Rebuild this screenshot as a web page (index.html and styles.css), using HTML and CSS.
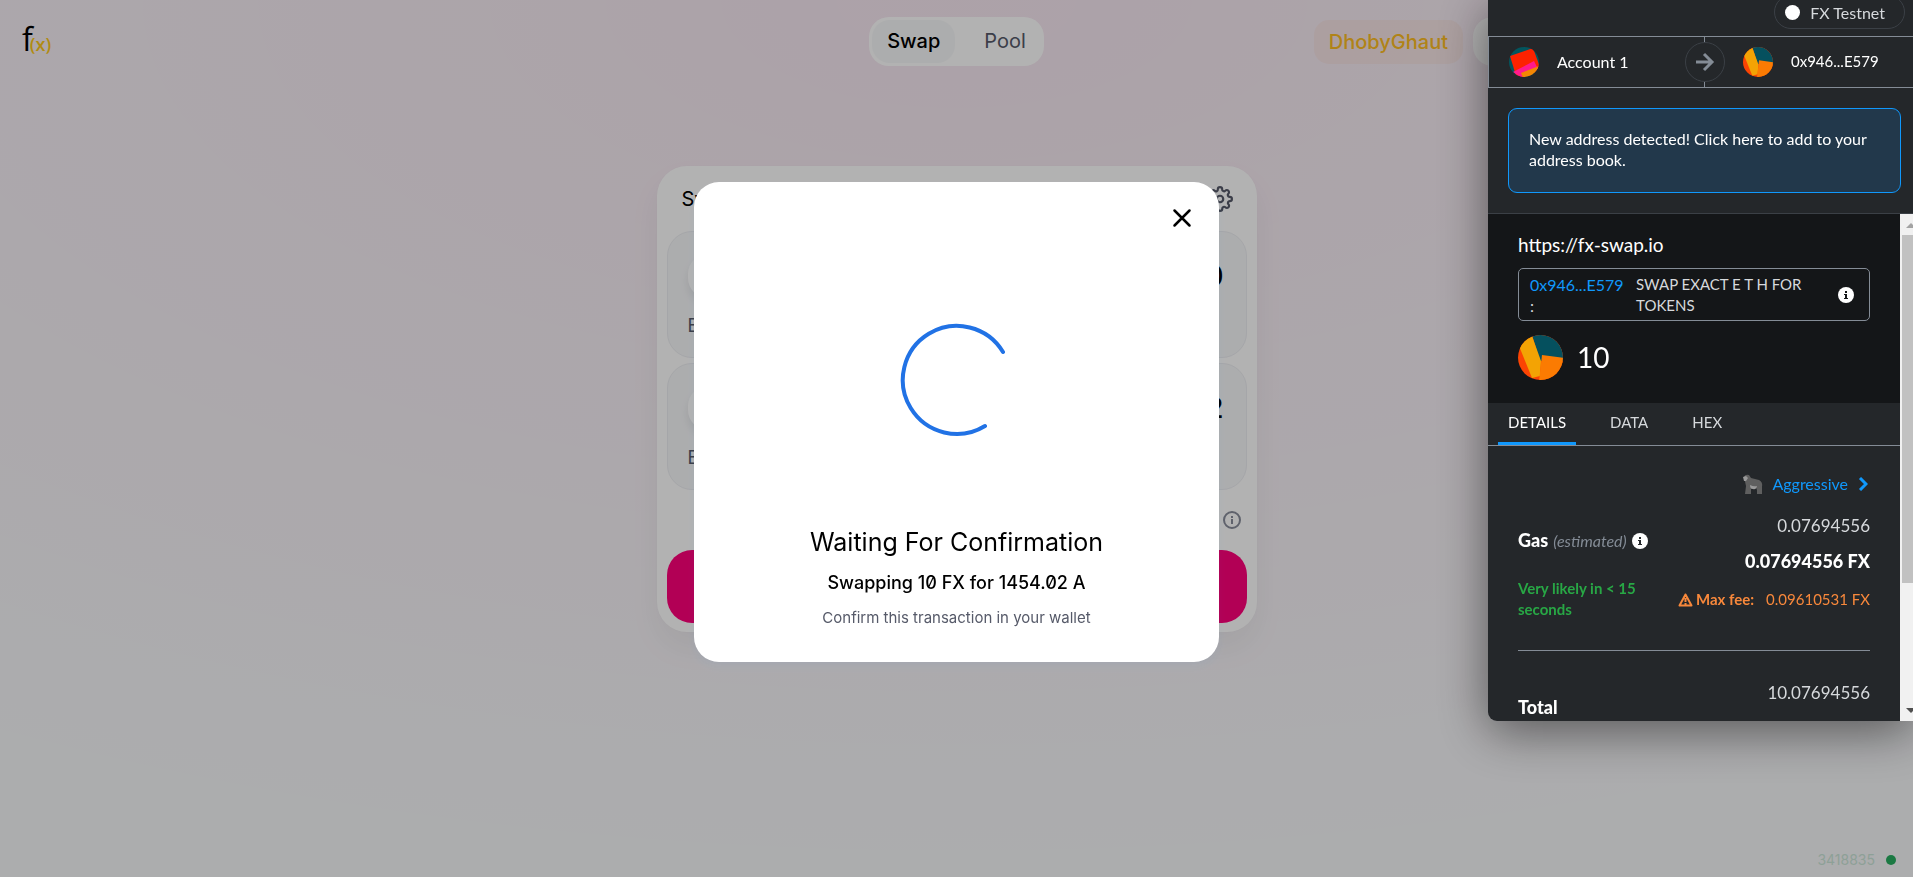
FILE: index.html
```html
<!DOCTYPE html>
<html lang="en">
<head>
<meta charset="utf-8">
<title>FX Swap</title>
<link rel="stylesheet" href="styles.css">
</head>
<body>
<div class="app">
  <header class="topbar">
    <a class="logo" href="#" aria-label="f(x) home"><span class="logo-f">f</span><span class="logo-x">(x)</span></a>
    <nav class="nav">
      <a class="nav-link active" href="#">Swap</a>
      <a class="nav-link" href="#">Pool</a>
    </nav>
    <div class="topbar-right">
      <span class="network">DhobyGhaut</span>
      <button class="account-pill" aria-label="Account"></button>
    </div>
  </header>

  <main class="swap-card">
    <div class="swap-head">
      <span>Swap</span>
      <button class="bare" aria-label="Settings">
        <svg width="26" height="26" viewBox="0 0 24 24" fill="none" stroke="#565a69" stroke-width="2" stroke-linecap="round" stroke-linejoin="round"><circle cx="12" cy="12" r="3"/><path d="M19.4 15a1.65 1.65 0 0 0 .33 1.82l.06.06a2 2 0 1 1-2.83 2.83l-.06-.06a1.65 1.65 0 0 0-2.8 1.17V21a2 2 0 1 1-4 0v-.09a1.65 1.65 0 0 0-2.9-1.08l-.06.06a2 2 0 1 1-2.83-2.83l.06-.06A1.65 1.65 0 0 0 3.09 14H3a2 2 0 1 1 0-4h.09A1.65 1.65 0 0 0 4.6 7.2l-.33-.02a2 2 0 1 1 2.83-2.83l.06.06A1.65 1.65 0 0 0 10 3.09V3a2 2 0 1 1 4 0v.09a1.65 1.65 0 0 0 2.82 1.27l.06-.06a2 2 0 1 1 2.83 2.83l-.06.06A1.65 1.65 0 0 0 20.91 10H21a2 2 0 1 1 0 4h-.09a1.65 1.65 0 0 0-1.51 1z"/></svg>
      </button>
    </div>
    <section class="panel">
      <div class="panel-row"><button class="token">FX</button><span class="amount">10</span></div>
      <span class="balance">Balance</span>
    </section>
    <section class="panel">
      <div class="panel-row"><button class="token">A</button><span class="amount">1454.02</span></div>
      <span class="balance">Balance</span>
    </section>
    <div class="rate">
      <svg width="20" height="20" viewBox="0 0 20 20" fill="none" stroke="#888d9b" stroke-width="2"><circle cx="10" cy="10" r="8"/><path d="M10 9v5M10 6v2"/></svg>
    </div>
    <button class="swap-btn" aria-label="Swap"></button>
  </main>

  <footer class="block"><span>3418835</span><i class="block-dot"></i></footer>
</div>

<div class="overlay">
  <div class="modal" role="dialog" aria-labelledby="wait-title">
    <button class="bare close" aria-label="Close">
      <svg width="30" height="30" viewBox="0 0 24 24" fill="none" stroke="#000" stroke-width="2" stroke-linecap="round"><path d="M18 6 6 18M6 6l12 12"/></svg>
    </button>
    <svg class="spinner" width="114" height="114" viewBox="0 0 114 114" fill="none" stroke="#2172e5" stroke-width="4" stroke-linecap="round"><path d="M85 103A54 54 0 1 1 103 29"/></svg>
    <h1 class="modal-title" id="wait-title">Waiting For Confirmation</h1>
    <p class="modal-sub">Swapping 10 FX for 1454.02 A</p>
    <p class="modal-note">Confirm this transaction in your wallet</p>
  </div>
</div>

<aside class="wallet">
  <div class="net-row"><button class="net-pill"><i class="net-dot"></i>FX Testnet</button></div>
  <div class="accounts">
    <div class="acct">
      <svg class="avatar" viewBox="0 0 30 30"><defs><clipPath id="ca"><circle cx="15" cy="15" r="15"/></clipPath></defs><g clip-path="url(#ca)"><path fill="#03555e" d="M0 0h30v30H0z"/><path fill="#fc2200" d="M1 9 24 1l8 22-24 9z"/><path fill="#ff1a8c" d="M4 25 25 14l4 8-16 9z"/><path fill="#f38603" d="M12 26l18-7v12H14z"/></g></svg>
      <span>Account 1</span>
    </div>
    <div class="acct">
      <svg class="avatar" viewBox="0 0 45 45"><defs><clipPath id="cb"><circle cx="22.500" cy="22.500" r="22.500"/></clipPath></defs><g clip-path="url(#cb)"><path fill="#fb4403" d="M0 0h45v45H0z"/><path fill="#05505e" d="M14 0h31v26H22z"/><path fill="#f3a304" d="M14 1-1 6l15 37 8-2 1-15z"/><path fill="#fb7b02" d="m24 20 22 3v23H21z"/></g></svg>
      <span>0x946...E579</span>
    </div>
    <span class="arrow"><svg width="20" height="20" viewBox="0 0 20 20" fill="none" stroke="#848c96" stroke-width="3"><path d="M1 10h16M9 2l8 8-8 8"/></svg></span>
  </div>
  <div class="notice-wrap"><button class="notice">New address detected! Click here to add to your address book.</button></div>

  <div class="scroll-area">
    <div class="content">
      <section class="summary">
        <div class="origin">https://fx-swap.io</div>
        <div class="call">
          <span class="call-addr"><a href="#">0x946...E579</a> :</span>
          <span class="call-name">SWAP EXACT E T H FOR TOKENS</span>
          <svg width="16" height="16" viewBox="0 0 16 16"><circle cx="8" cy="8" r="8" fill="#fff"/><path d="M6 7h3v4h1v1H6v-1h1V8H6zM7 4h2v2H7z" fill="#141618"/></svg>
        </div>
        <div class="value">
          <svg class="avatar-lg" viewBox="0 0 45 45"><g clip-path="url(#cb)"><path fill="#fb4403" d="M0 0h45v45H0z"/><path fill="#05505e" d="M14 0h31v26H22z"/><path fill="#f3a304" d="M14 1-1 6l15 37 8-2 1-15z"/><path fill="#fb7b02" d="m24 20 22 3v23H21z"/></g></svg>
          <span>10</span>
        </div>
      </section>
      <div class="tabs">
        <button class="tab on">DETAILS</button>
        <button class="tab">DATA</button>
        <button class="tab">HEX</button>
      </div>
      <section class="details">
        <button class="speed">
          <svg width="20" height="20" viewBox="0 0 20 20"><path fill="#5f5f5f" d="M1 3q1-3 5-2l2 3 8 2q4 2 3 7v7h-5v-4l-1-2-5 1v5H2l1-8z"/><path fill="#9a9a9a" d="M0 3l3-1 2 2-2 3-2 0zM7 11q4 2 7 1-1 4-4 3-3 0-3-4z"/></svg>
          Aggressive
          <svg class="chev" width="10" height="14" viewBox="0 0 10 14" fill="none" stroke="#1098fc" stroke-width="3"><path d="M2 1l6 6-6 6"/></svg>
        </button>
        <div class="gas">
          <div class="gas-left">
            <div class="gas-label"><b>Gas</b><i>(estimated)</i><svg width="16" height="16" viewBox="0 0 16 16"><circle cx="8" cy="8" r="8" fill="#fff"/><path d="M6 7h3v4h1v1H6v-1h1V8H6zM7 4h2v2H7z" fill="#24272a"/></svg></div>
            <div class="likely">Very likely in &lt; 15 seconds</div>
          </div>
          <div class="gas-right">
            <span class="num">0.07694556</span>
            <b class="num-b">0.07694556 FX</b>
            <div class="maxfee"><svg width="15" height="14" viewBox="0 0 15 14" fill="none" stroke="#f8883b" stroke-width="2" stroke-linejoin="round"><path d="M7.500 1.500 1.500 12.500h12zM7.500 5v4M7.500 10v1.500"/></svg><b>Max fee:</b><span>0.09610531 FX</span></div>
          </div>
        </div>
        <div class="total"><b>Total</b><span class="num">10.07694556</span></div>
      </section>
    </div>
    <div class="bar" aria-hidden="true"><i class="bar-up"></i><i class="bar-thumb"></i><i class="bar-down"></i></div>
  </div>
</aside>
</body>
</html>
```
FILE: styles.css
```css
* { box-sizing: border-box; }
body {
  margin: 0;
  min-height: 100vh;
  overflow: hidden;
  font-family: Inter, "Liberation Sans", sans-serif;
  font-variant-numeric: slashed-zero;
  color: #000;
  background: #f7f8fa radial-gradient(100vw 100vh at 50% 0, rgba(255, 0, 122, 0.065), rgba(255, 0, 122, 0) 100%) no-repeat;
}
button { font: inherit; color: inherit; border: 0; padding: 0; background: none; cursor: pointer; }
a { text-decoration: none; color: inherit; }
p, h1 { margin: 0; }
svg { flex-shrink: 0; }
.bare { display: flex; }

.app { min-height: 100vh; display: flex; flex-direction: column; align-items: center; }
.topbar {
  align-self: stretch;
  display: grid;
  grid-template-columns: 1fr auto 1fr;
  align-items: center;
  padding: 17px 20px 0;
}
.logo { display: flex; align-items: baseline; padding: 0 0 5px 2px; font-family: "Open Sans", sans-serif; }
.logo-f { font-size: 32px; line-height: 36px; }
.logo-x { font-size: 18px; font-weight: 600; color: #fdc81a; margin-left: -3px; }
.nav { display: flex; padding: 3px; gap: 14px; background: #fff; border-radius: 20px; }
.nav-link { padding: 0 15px; line-height: 43px; font-size: 20px; color: #565a69; border-radius: 18px; font-weight: 400; }
.nav-link.active { color: #000; font-weight: 500; background: #f7f8fa; }
.topbar-right { display: flex; justify-content: flex-end; align-items: center; gap: 10px; }
.network { padding: 0 15px; line-height: 44px; font-size: 20px; font-weight: 500; color: #fdbc22; background: rgba(255, 140, 60, 0.07); border-radius: 15px; }
.account-pill { width: 420px; height: 49px; border-radius: 20px; background: #fff; }

.swap-card {
  width: 600px;
  margin-top: 100px;
  padding: 0 10px 9px;
  background: #fff;
  border-radius: 30px;
  box-shadow: 0 0 2px rgba(0, 0, 0, 0.02), 0 16px 32px rgba(0, 0, 0, 0.05);
}
.swap-head { display: flex; justify-content: space-between; align-items: center; height: 65px; padding: 0 14px 0 15px; font-size: 20px; }
.panel { height: 127px; margin-bottom: 5px; padding: 22px 22px 0 20px; background: #f7f8fa; border: 1px solid #edeef2; border-radius: 25px; }
.panel-row { display: flex; justify-content: space-between; align-items: center; }
.token { width: 140px; height: 44px; border-radius: 20px; background: #fff; box-shadow: 0 6px 10px rgba(0, 0, 0, 0.08); }
.amount { font-size: 28px; font-weight: 500; }
.balance { display: block; margin-top: 16px; font-size: 18px; line-height: 24px; color: #565a69; }
.rate { display: flex; justify-content: flex-end; align-items: center; height: 55px; padding: 0 5px 5px 0; }
.swap-btn { display: block; width: 100%; height: 73px; border-radius: 25px; background: #ff007a; }

.block { margin-top: auto; align-self: flex-end; display: flex; align-items: center; gap: 11px; padding: 0 17px 8px; font-size: 14px; line-height: 18px; color: #cbe6d8; }
.block-dot { width: 10px; height: 10px; border-radius: 50%; background: #27ae60; }

.overlay {
  position: fixed;
  inset: 0;
  display: flex;
  justify-content: center;
  align-items: center;
  padding-bottom: 33px;
  background: rgba(0, 0, 0, 0.3);
}
.modal {
  width: 525px;
  padding: 21px 22px 34px;
  display: flex;
  flex-direction: column;
  align-items: center;
  background: #fff;
  border-radius: 25px;
  box-shadow: 0 5px 10px rgba(47, 128, 237, 0.05);
}
.close { align-self: flex-end; }
.spinner { margin: 90px 0 89px; }
.modal-title { font-size: 25px; line-height: 32px; font-weight: 400; }
.modal-sub { margin-top: 14px; font-size: 18px; line-height: 22px; font-weight: 500; }
.modal-note { margin-top: 14px; font-size: 15px; line-height: 20px; color: #565a69; }

.wallet {
  position: fixed;
  top: 0;
  right: 0;
  width: 425px;
  height: 721px;
  display: flex;
  flex-direction: column;
  font-family: Lato, sans-serif;
  font-variant-numeric: normal;
  font-size: 16px;
  line-height: 21px;
  color: #fff;
  background: #24272a;
  border-radius: 0 0 0 9px;
  box-shadow: 0 10px 50px rgba(0, 0, 0, 0.5);
}
.net-row { display: flex; justify-content: flex-end; height: 36px; padding-right: 8px; }
.net-pill { display: flex; align-items: center; gap: 10px; height: 34px; margin-top: -5px; padding: 0 19px 0 10px; color: #d6d9dc; border: 1px solid #3b4046; border-radius: 17px; }
.net-dot { width: 15px; height: 15px; border-radius: 50%; background: #fff; }
.accounts { position: relative; display: grid; grid-template-columns: 215px 1fr; height: 52px; border: 1px solid #848c96; border-right: 0; }
.acct { display: flex; align-items: center; gap: 18px; padding-left: 20px; }
.acct span { padding-bottom: 2px; }
.acct + .acct { border-left: 1px solid #848c96; padding-left: 38px; font-size: 15px; }
.avatar { width: 30px; height: 30px; }
.avatar-lg { width: 45px; height: 45px; }
.arrow { position: absolute; left: 196px; top: 5px; width: 40px; height: 40px; display: grid; place-items: center; border: 1px solid #3b4046; border-radius: 50%; background: #24272a; }
.notice-wrap { padding: 20px 12px 20px 20px; border-bottom: 1px solid #3b4046; }
.notice { width: 100%; height: 85px; padding: 0 20px 3px; text-align: left; background: #22384b; border: 1px solid #1098fc; border-radius: 9px; }

.scroll-area { flex: 1; min-height: 0; display: flex; }
.content { flex: 1; min-width: 0; overflow: hidden; border-radius: 0 0 0 9px; }
.summary { height: 189px; padding: 19px 30px 0; background: #141618; }
.origin { font-size: 19px; line-height: 24px; }
.call { display: flex; align-items: center; height: 53px; margin-top: 11px; padding: 0 15px 0 11px; border: 1px solid #848c96; border-radius: 5px; color: #d6d9dc; }
.call-addr { width: 97px; margin-right: 9px; }
.call-addr a { color: #1098fc; }
.call-name { width: 180px; margin-right: auto; font-size: 15px; }
.value { display: flex; align-items: center; gap: 14px; margin-top: 14px; font-size: 28px; line-height: 36px; }
.value span { padding-bottom: 2px; }
.tabs { display: flex; gap: 24px; height: 43px; padding-left: 10px; border-bottom: 1px solid #848c96; }
.tab { padding: 0 10px; border-bottom: 3px solid transparent; color: #d6d9dc; font-size: 15px; }
.tab.on { color: #fff; border-color: #1098fc; }
.details { padding: 28px 30px 0; }
.speed { display: flex; align-items: center; gap: 9px; margin-left: auto; line-height: 20px; color: #1098fc; }
.chev { margin: 0 2px 0 1px; }
.gas { display: flex; justify-content: space-between; height: 157px; padding-top: 20px; border-bottom: 1px solid #848c96; }
.gas-left { width: 140px; padding-top: 16px; }
.gas-label { display: flex; align-items: center; gap: 5px; white-space: nowrap; }
.gas-label b, .total b { font-size: 18px; font-weight: 900; }
.gas-label i { color: #848c96; }
.likely { width: 130px; margin-top: 27px; font-size: 15px; font-weight: 700; color: #28a745; }
.gas-right { display: flex; flex-direction: column; align-items: flex-end; }
.num { font-size: 17px; line-height: 24px; color: #d6d9dc; }
.num-b { margin-top: 11px; font-size: 18px; line-height: 24px; font-weight: 900; }
.maxfee { display: flex; align-items: center; margin-top: 16px; font-size: 15px; color: #f8883b; white-space: nowrap; }
.maxfee b { margin: 0 12px 0 3px; }
.total { display: flex; justify-content: space-between; padding-top: 30px; }
.total b { margin-top: 16px; }

.bar { display: flex; flex-direction: column; width: 13px; padding: 9px 0 8px 2px; background: #f1f1f1; }
.bar-up, .bar-down { margin-left: 4px; width: 0; border: 5px solid transparent; }
.bar-up { border-top: 0; border-bottom-color: #a3a3a3; }
.bar-down { border-bottom: 0; border-top-color: #505050; margin-top: auto; }
.bar-thumb { height: 348px; margin-top: 7px; background: #c1c1c1; }
```
